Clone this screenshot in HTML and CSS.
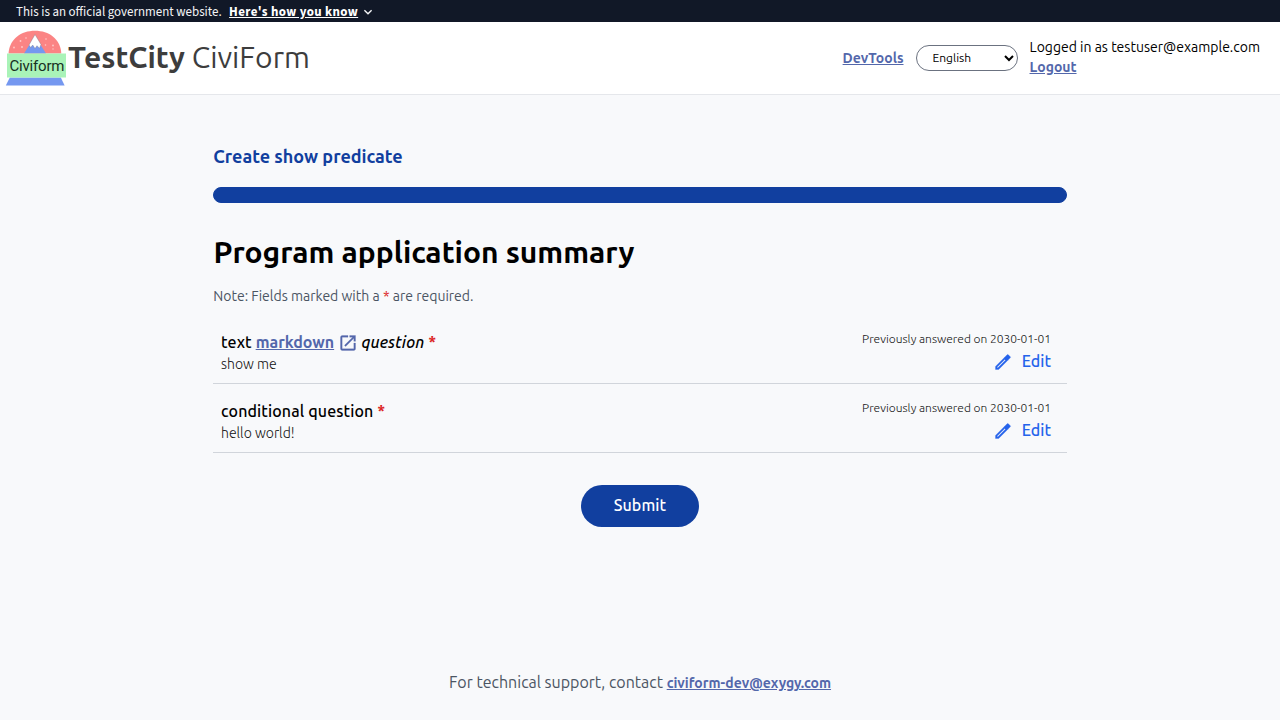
FILE: index.html
```
<!DOCTYPE html>
<html lang="en">
<head>
<meta charset="utf-8">
<title>Program application summary</title>
<link rel="stylesheet" href="styles.css">
</head>
<body>
<div class="banner">
  <span>This is an official government website.</span>
  <a class="banner-link">Here's how you know</a>
  <svg class="chevron" viewBox="0 0 10 10"><path d="M1.400 3.200 5 6.800l3.600-3.600" fill="none" stroke="currentColor" stroke-width="1.400"/></svg>
</div>
<header class="header">
  <div class="brand">
    <svg class="logo" viewBox="0 0 64 60">
      <path d="M4.500 25.500C5.500 11 17 2.800 31 2.800S56.500 11 57.300 25.500Z" fill="#fb8484"/>
      <path d="M20 25.500 31 8l11 17.500Z" fill="#7598f0"/>
      <path d="M31 6.500 37 16.500l-1.500 3.800-2.500-2.600-2 2.900-2.300-3.600-2 2.600L25 17Z" fill="#fff" stroke="#778" stroke-width=".4"/>
      <g fill="#ffc9c9"><circle cx="16.500" cy="13" r=".9"/><circle cx="22" cy="10" r=".8"/><circle cx="10" cy="19.500" r=".9"/><circle cx="18" cy="19" r=".9"/><circle cx="42" cy="11" r=".8"/><circle cx="49" cy="17.500" r=".9"/><circle cx="41.500" cy="17" r=".8"/><circle cx="49" cy="21" r=".7"/></g>
      <path d="M5.800 49.500h51l3.800 8H1.800Z" fill="#7598f0"/>
      <path d="M3 25.500h59v24H3Z" fill="#a9f3b8"/>
      <text x="5.500" y="43.300" class="logo-text" textLength="55">Civiform</text>
    </svg>
    <div class="brand-name"><b>TestCity</b> CiviForm</div>
  </div>
  <nav class="nav">
    <a class="link">DevTools</a>
    <select class="language"><option>English</option></select>
    <div class="account"><div>Logged in as testuser@example.com</div><a class="link">Logout</a></div>
  </nav>
</header>
<main class="main">
  <h2 class="program">Create show predicate</h2>
  <div class="progress"></div>
  <h1 class="title">Program application summary</h1>
  <p class="note">Note: Fields marked with a <span class="required">*</span> are required.</p>
  <section class="row">
    <div>
      <div class="question">text <a class="question-link">markdown<svg class="external" viewBox="0 0 24 24"><path fill="currentColor" stroke="currentColor" stroke-width=".3" d="M19 19H5V5h7V3H5a2 2 0 0 0-2 2v14a2 2 0 0 0 2 2h14c1.100 0 2-.9 2-2v-7h-2v7zM14 3v2h3.590l-9.830 9.830 1.410 1.410L19 6.410V10h2V3h-7z"/></svg></a> <em>question</em> <span class="required">*</span></div>
      <div class="answer">show me</div>
    </div>
    <div class="side">
      <div class="date">Previously answered on 2030-01-01</div>
      <a class="edit"><svg class="pencil" viewBox="0 0 24 24"><path fill="currentColor" stroke="currentColor" stroke-width=".35" d="M3 17.250V21h3.750L17.810 9.940l-3.750-3.750L3 17.250zM5.920 19H5v-.92l9.060-9.060.92.92L5.920 19zM20.710 5.630l-2.340-2.340a1 1 0 0 0-1.410 0l-2.900 2.900 3.750 3.750 2.900-2.900a1 1 0 0 0 0-1.410z"/></svg>Edit</a>
    </div>
  </section>
  <section class="row">
    <div>
      <div class="question">conditional question <span class="required">*</span></div>
      <div class="answer">hello world!</div>
    </div>
    <div class="side">
      <div class="date">Previously answered on 2030-01-01</div>
      <a class="edit"><svg class="pencil" viewBox="0 0 24 24"><path fill="currentColor" stroke="currentColor" stroke-width=".35" d="M3 17.250V21h3.750L17.810 9.940l-3.750-3.750L3 17.250zM5.920 19H5v-.92l9.060-9.060.92.92L5.920 19zM20.710 5.630l-2.340-2.340a1 1 0 0 0-1.410 0l-2.900 2.900 3.750 3.750 2.900-2.900a1 1 0 0 0 0-1.410z"/></svg>Edit</a>
    </div>
  </section>
  <button class="submit">Submit</button>
</main>
<footer class="footer">For technical support, contact <a class="link">civiform-dev@exygy.com</a></footer>
</body>
</html>
```
FILE: styles.css
```
* { box-sizing: border-box; }
body {
  margin: 0;
  height: 720px;
  overflow: hidden;
  display: flex;
  flex-direction: column;
  background: #f8f9fb;
  color: #000;
  font: 16px/24px Ubuntu, "Noto Sans", sans-serif;
}
.banner {
  height: 22px;
  display: flex;
  align-items: center;
  padding: 1px 16px 0;
  background: #111827;
  color: #f3f4f6;
  font: 12.96px/18px "Source Sans 3", "Noto Sans CJK SC", sans-serif;
}
.banner-link {
  margin-left: 7.500px;
  color: #fff;
  font-weight: 700;
  letter-spacing: .03em;
  text-decoration: underline;
}
.chevron { width: 10px; height: 10px; margin: 1px 0 0 4.500px; }
.header {
  height: 73px;
  display: flex;
  align-items: center;
  justify-content: space-between;
  padding: 0 20px 0 4px;
  background: #fff;
  border-bottom: 1px solid #e5e7eb;
}
.brand { display: flex; align-items: center; }
.logo { width: 64px; height: 60px; }
.logo-text { font: 15px Roboto, sans-serif; fill: #17301f; }
.brand-name { padding-bottom: 2px; color: #3d3d3d; font-size: 30px; line-height: 36px; white-space: pre; }
.nav { display: flex; align-items: center; font-size: 14px; line-height: 20px; }
.link { color: #5367ab; font-size: 14px; font-weight: 600; text-decoration: underline; }
.account { padding-bottom: 2px; }
.language {
  width: 102px;
  height: 26px;
  margin: 0 12px;
  padding: 0 0 2px 12px;
  border: 1px solid #6b7280;
  border-radius: 13px;
  background: #fff;
  color: #000;
  font: 12px/16px Ubuntu, sans-serif;
}
.main { width: 854px; margin: 47px auto 0; display: flex; flex-direction: column; }
.program { margin: 0; color: #113f9f; font-size: 18px; line-height: 28px; font-weight: 600; padding-left: .3px; }
.progress { height: 16px; margin-top: 17px; border: 1px solid #113f9f; border-radius: 8px; background: #113f9f; }
.title { margin: 31px 0 0; padding-left: .4px; font-size: 30px; line-height: 36px; font-weight: 600; }
.note { margin: 16px 0 9px; padding-left: .3px; color: #4b5563; font-size: 14px; line-height: 20px; }
.required { color: #dc2626; }
.row {
  height: 69px;
  display: flex;
  justify-content: space-between;
  padding: 15px 16px 0 8px;
  border-bottom: 1px solid #d1d5db;
}
.question { font-weight: 500; letter-spacing: .12px; white-space: nowrap; }
.question .required { font-weight: 600; }
.question-link { color: #5367ab; font-weight: 600; letter-spacing: 0; text-decoration: underline; }
.external { width: 20px; height: 20px; margin-left: 3.500px; vertical-align: -5px; }
.answer { color: #111; font-size: 14px; line-height: 20px; font-weight: 350; }
.side { display: flex; flex-direction: column; align-items: flex-end; padding-top: 1px; }
.date { color: #111; font-size: 12px; line-height: 16px; font-weight: 330; }
.edit { display: flex; align-items: center; margin-top: 2px; color: #2563eb; font-weight: 480; }
.pencil { width: 20px; height: 20px; margin: 1px 9px 0 0; }
.submit {
  align-self: center;
  width: 118px;
  height: 42px;
  margin-top: 32px;
  padding: 0 0 2px;
  border: 0;
  border-radius: 21px;
  background: #113f9f;
  color: #fff;
  font: 500 16px/24px Ubuntu, sans-serif;
  letter-spacing: .1px;
}
.footer { margin: auto auto 25px; color: #4b5563; }
```
